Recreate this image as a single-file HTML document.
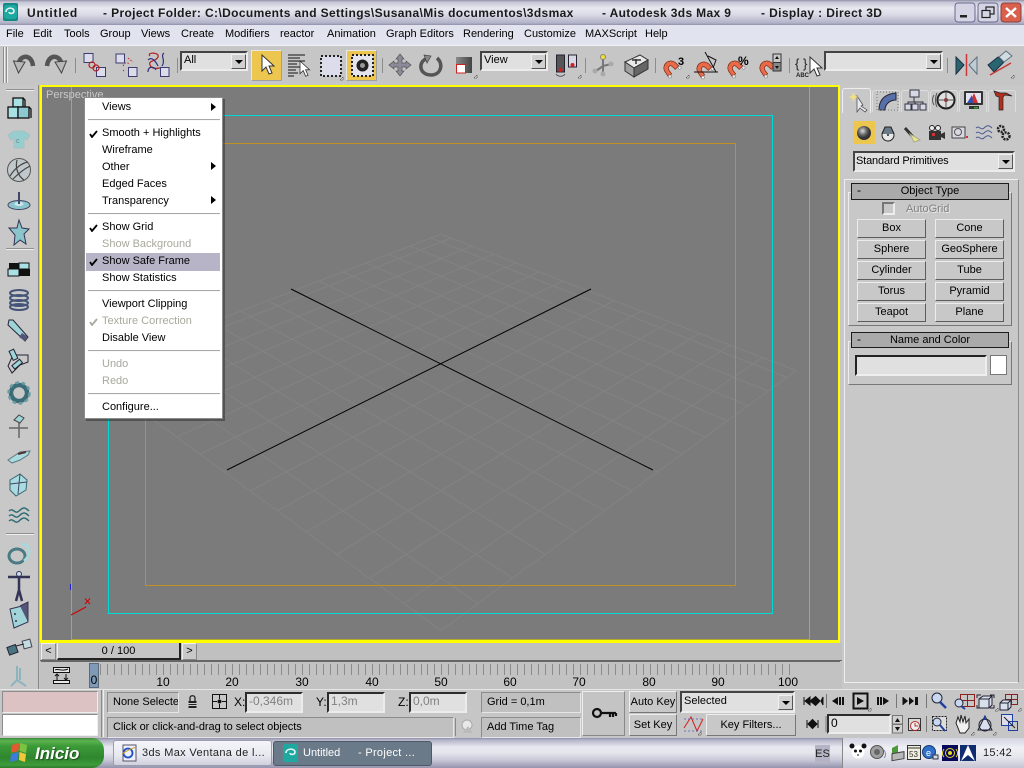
<!DOCTYPE html>
<html><head><meta charset="utf-8"><title>Untitled - 3ds Max</title>
<style>
html,body{margin:0;padding:0;width:1024px;height:768px;overflow:hidden;background:#c6c6c6}
body{position:relative;font:11px "Liberation Sans",sans-serif;color:#000}
.a{position:absolute;box-sizing:border-box}
.t{position:absolute;white-space:nowrap;font:11px/13px "Liberation Sans",sans-serif;color:#000}
.c{text-align:center}
.tt{position:absolute;top:6px;white-space:nowrap;font:bold 12px/14px "Liberation Sans",sans-serif;color:#1a1a1a}
.b{position:absolute;box-sizing:border-box;background:#c8c8c8;border:1px solid;border-color:#ececec #5c5c5c #5c5c5c #ececec;text-align:center;font:11px/17px "Liberation Sans",sans-serif}
.s{position:absolute;box-sizing:border-box;background:#e0e0e0;border:2px solid;border-color:#2c2c2c #ececec #ececec #2c2c2c;font:11px/15px "Liberation Sans",sans-serif;padding-left:2px;white-space:nowrap}
.e{position:absolute;box-sizing:border-box;background:#c0c0c0;border:1px solid;border-color:#8c8c8c #e6e6e6 #e6e6e6 #8c8c8c;font:11px/19px "Liberation Sans",sans-serif;white-space:nowrap;overflow:hidden}
.dd{position:absolute;box-sizing:border-box;background:#e0e0e0;border:2px solid;border-color:#444 #ececec #ececec #444;font:11px/14px "Liberation Sans",sans-serif;padding-left:2px}
.ar{position:absolute;top:0;right:0;width:15px;height:15px;background:#d0d0d0;border:1px solid;border-color:#f0f0f0 #555 #555 #f0f0f0;box-sizing:border-box}
.ar:after{content:"";position:absolute;left:3px;top:5px;border:4px solid transparent;border-top:4px solid #000;border-bottom:0}
.m{position:absolute;left:17px;white-space:nowrap;font:11px/13px "Liberation Sans",sans-serif;color:#000}
.g{color:#a8a89c}
.sep{position:absolute;left:3px;width:132px;height:2px;background:#a8a8a8;border-bottom:1px solid #f8f8f8;box-sizing:border-box}
.ck{position:absolute;left:4px;width:9px;height:8px}
.sm{position:absolute;left:126px;width:0;height:0;border:4px solid transparent;border-left:5px solid #000;border-right:0}
</style></head><body>

<!-- Title bar -->
<div class="a" style="left:0;top:0;width:1024px;height:25px;background:linear-gradient(#8f8fa8 0,#c4c4d4 2px,#e8e8f0 8px,#dcdce8 14px,#b2b2c8 23px,#8f8fa8 25px)"></div>
<div class="tt" style="left:27px;letter-spacing:.8px">Untitled</div>
<div class="tt" style="left:103px;letter-spacing:.37px">- Project Folder: C:\Documents and Settings\Susana\Mis documentos\3dsmax</div>
<div class="tt" style="left:602px;letter-spacing:.35px">- Autodesk 3ds Max 9</div>
<div class="tt" style="left:761px;letter-spacing:.38px">- Display : Direct 3D</div>

<!-- Menu -->
<div class="a" style="left:0;top:25px;width:1024px;height:20px;background:#e1e3ee"></div>
<div class="t" style="left:6px;top:28px">File</div>
<div class="t" style="left:33px;top:28px">Edit</div>
<div class="t" style="left:64px;top:28px">Tools</div>
<div class="t" style="left:100px;top:28px">Group</div>
<div class="t" style="left:141px;top:28px">Views</div>
<div class="t" style="left:181px;top:28px">Create</div>
<div class="t" style="left:225px;top:28px">Modifiers</div>
<div class="t" style="left:280px;top:28px">reactor</div>
<div class="t" style="left:327px;top:28px">Animation</div>
<div class="t" style="left:386px;top:28px">Graph Editors</div>
<div class="t" style="left:463px;top:28px">Rendering</div>
<div class="t" style="left:524px;top:28px">Customize</div>
<div class="t" style="left:585px;top:28px">MAXScript</div>
<div class="t" style="left:645px;top:28px">Help</div>

<!-- Toolbar -->
<div class="a" style="left:0;top:45px;width:1024px;height:40px;background:#c6c6c6;border-top:1px solid #f2f2f2"></div>
<div class="a" style="left:251px;top:50px;width:31px;height:31px;background:#ecc64e;border:1px solid;border-color:#e8e8e8 #a0a0a0 #a0a0a0 #e8e8e8"></div>
<div class="a" style="left:346px;top:50px;width:31px;height:31px;background:#ecc64e;border:1px solid;border-color:#e8e8e8 #a0a0a0 #a0a0a0 #e8e8e8"></div>
<div class="dd" style="left:180px;top:51px;width:68px;height:20px">All<span class="ar" style="top:1px"></span></div>
<div class="dd" style="left:480px;top:51px;width:68px;height:20px">View<span class="ar" style="top:1px"></span></div>
<div class="dd" style="left:824px;top:51px;width:119px;height:20px"><span class="ar" style="top:1px"></span></div>

<!-- Viewport -->
<div class="a" style="left:40px;top:85px;width:800px;height:558px;background:#7b7b7b;border:solid #ffff00;border-width:2px 2px 3px 2px"></div>
<svg class="a" style="left:42px;top:87px" width="796" height="553" viewBox="42 87 796 553">
<g fill="none" stroke="#838383" stroke-width="1">
<path d="M441 234.2L85.9 370.5M451.1 238.1L95.1 377.3M471.9 246.1L114.1 391.1M493.4 254.3L134 405.7M515.8 262.9L154.8 421M539 271.9L176.8 437.1M563.1 281.1L200 454M588.1 290.7L224.4 471.9M614.2 300.7L250.1 490.8M641.4 311.1L277.3 510.7M669.7 322L306.2 531.9M699.3 333.4L336.8 554.3M730.1 345.2L369.4 578.1M762.3 357.6L404 603.5M796.1 370.5L441 630.6"/>
<path d="M441 234.2L796.1 370.5M430.9 238.1L786.9 377.3M410.1 246.1L767.9 391.1M388.6 254.3L748 405.7M366.2 262.9L727.2 421M343 271.9L705.2 437.1M318.9 281.1L682 454M293.9 290.7L657.6 471.9M267.8 300.7L631.9 490.8M240.6 311.1L604.7 510.7M212.3 322L575.8 531.9M182.7 333.4L545.2 554.3M151.9 345.2L512.6 578.1M119.7 357.6L478 603.5M85.9 370.5L441 630.6"/>
</g>
<rect x="71.5" y="86.5" width="738" height="553" fill="none" stroke="#b4ac28"/>
<rect x="108.5" y="115.5" width="664" height="498" fill="none" stroke="#00d8d8"/>
<rect x="145.5" y="143.5" width="590" height="442" fill="none" stroke="#c09020"/>
<path d="M291 289L653 470M591 289L227 470" stroke="#000" stroke-width="1" fill="none"/>
<path d="M71 615L86 607" stroke="#d00000" fill="none"/>
<path d="M85 598.5L90 604M90 598.5L85 604" stroke="#d00000" fill="none"/>
<path d="M70.500 584V590" stroke="#2020d0" fill="none"/>
</svg>
<div class="t" style="left:46px;top:89px;color:#c8c8c8">Perspective</div>

<!-- Left panel -->
<div class="a" style="left:0;top:85px;width:39px;height:604px;background:#c8c8c8;border-right:1px solid #888"></div>
<div class="a" style="left:6px;top:89px;width:28px;height:2px;background:#909090;border-bottom:1px solid #eee"></div>
<div class="a" style="left:6px;top:248px;width:28px;height:2px;background:#909090;border-bottom:1px solid #eee"></div>
<div class="a" style="left:6px;top:533px;width:28px;height:2px;background:#909090;border-bottom:1px solid #eee"></div>

<!-- Right panel -->
<div class="a" style="left:841px;top:85px;width:183px;height:605px;background:#c8c8c8"></div>
<div class="a" style="left:844px;top:179px;width:175px;height:504px;border:1px solid;border-color:#eee #8c8c8c #eee #eee"></div>
<div class="a" style="left:842px;top:88px;width:29px;height:25px;background:#c8c8c8;border:1px solid #eee;border-bottom:0;border-radius:3px 3px 0 0"></div>
<div class="a" style="left:872px;top:90px;width:28px;height:22px;border:1px solid #ddd;border-bottom:0;border-radius:3px 3px 0 0"></div>
<div class="a" style="left:901px;top:90px;width:28px;height:22px;border:1px solid #ddd;border-bottom:0;border-radius:3px 3px 0 0"></div>
<div class="a" style="left:930px;top:90px;width:28px;height:22px;border:1px solid #ddd;border-bottom:0;border-radius:3px 3px 0 0"></div>
<div class="a" style="left:959px;top:90px;width:28px;height:22px;border:1px solid #ddd;border-bottom:0;border-radius:3px 3px 0 0"></div>
<div class="a" style="left:988px;top:90px;width:28px;height:22px;border:1px solid #ddd;border-bottom:0;border-radius:3px 3px 0 0"></div>
<div class="a" style="left:853px;top:121px;width:22px;height:23px;background:#ecc64e"></div>
<div class="dd" style="left:853px;top:151px;width:162px;height:21px;font-size:11px;line-height:16px;letter-spacing:-.15px;padding-left:1px">Standard Primitives<span class="ar" style="top:1px"></span></div>

<div class="a" style="left:848px;top:192px;width:164px;height:134px;border:1px solid;border-color:#eee #777 #777 #eee"></div>
<div class="a c" style="left:851px;top:183px;width:158px;height:17px;background:#aaaaaa;border:1px solid #1c1c1c;font:11px/15px 'Liberation Sans',sans-serif">Object Type</div>
<div class="t" style="left:857px;top:184px;font-size:12px">-</div>
<div class="a" style="left:882px;top:202px;width:13px;height:13px;background:#c8c8c8;border:2px solid;border-color:#777 #eee #eee #777"></div>
<div class="t" style="left:906px;top:203px;color:#808080;text-shadow:1px 1px 0 #e8e8e8">AutoGrid</div>
<div class="b" style="left:857px;top:219px;width:69px;height:19px">Box</div>
<div class="b" style="left:935px;top:219px;width:69px;height:19px">Cone</div>
<div class="b" style="left:857px;top:240px;width:69px;height:19px">Sphere</div>
<div class="b" style="left:935px;top:240px;width:69px;height:19px">GeoSphere</div>
<div class="b" style="left:857px;top:261px;width:69px;height:19px">Cylinder</div>
<div class="b" style="left:935px;top:261px;width:69px;height:19px">Tube</div>
<div class="b" style="left:857px;top:282px;width:69px;height:19px">Torus</div>
<div class="b" style="left:935px;top:282px;width:69px;height:19px">Pyramid</div>
<div class="b" style="left:857px;top:303px;width:69px;height:19px">Teapot</div>
<div class="b" style="left:935px;top:303px;width:69px;height:19px">Plane</div>

<div class="a" style="left:848px;top:341px;width:164px;height:44px;border:1px solid;border-color:#eee #777 #777 #eee"></div>
<div class="a c" style="left:851px;top:332px;width:158px;height:16px;background:#aaaaaa;border:1px solid #1c1c1c;font:11px/14px 'Liberation Sans',sans-serif">Name and Color</div>
<div class="t" style="left:857px;top:333px;font-size:12px">-</div>
<div class="a" style="left:855px;top:355px;width:132px;height:21px;background:#e0e0e0;border:2px solid;border-color:#222 #eee #eee #222"></div>
<div class="a" style="left:990px;top:355px;width:17px;height:20px;background:#fff;border:1px solid #777"></div>

<!-- Time slider -->
<div class="a" style="left:40px;top:643px;width:802px;height:18px;background:#c0c0c0;border-bottom:1px solid #666"></div>
<div class="a c" style="left:41px;top:643px;width:15px;height:17px;background:#c8c8c8;border:1px solid;border-color:#eee #888 #888 #eee;font:11px/15px 'Liberation Sans',sans-serif">&lt;</div>
<div class="a c" style="left:57px;top:643px;width:124px;height:17px;background:#c4c4c4;border:1px solid;border-width:0 2px 2px 1px;border-color:#eee #222 #222 #eee;font:11px/16px 'Liberation Sans',sans-serif">0 / 100</div>
<div class="a c" style="left:182px;top:643px;width:15px;height:17px;background:#c8c8c8;border:1px solid;border-color:#eee #888 #888 #eee;font:11px/15px 'Liberation Sans',sans-serif">&gt;</div>

<!-- Track -->
<div class="a" style="left:40px;top:661px;width:802px;height:28px;background:#c2c2c2"></div>
<div class="a c" style="left:89px;top:663px;width:10px;height:25px;background:#7e9ab6;border:1px solid #5a6a7a;font:12px/32px 'Liberation Sans',sans-serif">0</div>
<div class="t c" style="left:148px;top:675px;width:30px;font-size:12px;line-height:14px">10</div>
<div class="t c" style="left:217px;top:675px;width:30px;font-size:12px;line-height:14px">20</div>
<div class="t c" style="left:287px;top:675px;width:30px;font-size:12px;line-height:14px">30</div>
<div class="t c" style="left:357px;top:675px;width:30px;font-size:12px;line-height:14px">40</div>
<div class="t c" style="left:426px;top:675px;width:30px;font-size:12px;line-height:14px">50</div>
<div class="t c" style="left:495px;top:675px;width:30px;font-size:12px;line-height:14px">60</div>
<div class="t c" style="left:564px;top:675px;width:30px;font-size:12px;line-height:14px">70</div>
<div class="t c" style="left:634px;top:675px;width:30px;font-size:12px;line-height:14px">80</div>
<div class="t c" style="left:703px;top:675px;width:30px;font-size:12px;line-height:14px">90</div>
<div class="t c" style="left:773px;top:675px;width:30px;font-size:12px;line-height:14px">100</div>

<!-- Status -->
<div class="a" style="left:0;top:689px;width:1024px;height:49px;background:#c6c6c6;border-top:1px solid #e6e6e6"></div>
<div class="a" style="left:2px;top:691px;width:96px;height:22px;background:#dcc2c2;border:1px solid;border-color:#8c8c8c #eee #eee #8c8c8c"></div>
<div class="a" style="left:2px;top:714px;width:96px;height:22px;background:#fff;border:1px solid;border-color:#8c8c8c #eee #eee #8c8c8c"></div>
<div class="a" style="left:101px;top:690px;width:3px;height:47px;border-left:1px solid #888;border-right:1px solid #eee"></div>
<div class="e" style="left:107px;top:692px;width:72px;height:21px;padding-left:5px">None Selecte</div>
<div class="t" style="left:234px;top:696px;font-size:12px">X:</div>
<div class="s" style="left:245px;top:692px;width:58px;height:21px;color:#808080;font-size:12px">-0,346m</div>
<div class="t" style="left:316px;top:696px;font-size:12px">Y:</div>
<div class="s" style="left:327px;top:692px;width:58px;height:21px;color:#808080;font-size:12px">1,3m</div>
<div class="t" style="left:398px;top:696px;font-size:12px">Z:</div>
<div class="s" style="left:409px;top:692px;width:58px;height:21px;color:#808080;font-size:12px">0,0m</div>
<div class="e" style="left:481px;top:692px;width:100px;height:21px;padding-left:5px">Grid = 0,1m</div>
<div class="e" style="left:107px;top:717px;width:347px;height:21px;padding-left:5px;letter-spacing:-.05px">Click or click-and-drag to select objects</div>
<div class="e" style="left:481px;top:717px;width:100px;height:21px;padding-left:5px">Add Time Tag</div>
<div class="a" style="left:582px;top:691px;width:43px;height:45px;background:#c4c4c4;border:1px solid;border-color:#eee #888 #888 #eee"></div>
<div class="b" style="left:629px;top:691px;width:48px;height:22px;border-color:#eee #777 #777 #eee;font:11px/20px 'Liberation Sans',sans-serif;white-space:nowrap">Auto Key</div>
<div class="b" style="left:629px;top:714px;width:48px;height:22px;border-color:#eee #777 #777 #eee;font:11px/20px 'Liberation Sans',sans-serif">Set Key</div>
<div class="dd" style="left:680px;top:691px;width:115px;height:22px;font-size:11px;line-height:16px">Selected<span class="ar" style="top:2px;right:0"></span></div>
<div class="b" style="left:706px;top:714px;width:90px;height:22px;border-color:#eee #777 #777 #eee;font:11px/20px 'Liberation Sans',sans-serif">Key Filters...</div>
<div class="s" style="left:827px;top:714px;width:64px;height:20px;font-size:12px">0</div>

<!-- Taskbar -->
<div class="a" style="left:0;top:738px;width:1024px;height:30px;background:linear-gradient(#8e8eac 0,#b4b4c8 2px,#e8e8f0 9px,#e4e4ec 15px,#c8c8d8 22px,#a0a0b8 28px,#9494ae 30px)"></div>
<div class="a" style="left:842px;top:738px;width:182px;height:30px;background:linear-gradient(#d4d4e2 0,#f0f0f6 10px,#e4e4ec 20px,#c4c4d4 30px);border-left:1px solid #888"></div>
<div class="a" style="left:0;top:738px;width:104px;height:30px;background:linear-gradient(#3e8a3a 0,#5cb450 3px,#3c9a38 8px,#2f862e 20px,#3f9c3c 27px,#2a7a2a 30px);border-radius:0 12px 12px 0"></div>
<div class="t" style="left:35px;top:744px;font:italic bold 17px/19px 'Liberation Sans',sans-serif;color:#fff;text-shadow:1px 1px 1px #1c4c1c">Inicio</div>
<div class="a" style="left:113px;top:740px;width:159px;height:26px;background:linear-gradient(#f4f4fa,#e8e8f0 60%,#d0d0de);border:1px solid #9c9cb0;border-radius:3px"></div>
<div class="t" style="left:142px;top:747px;color:#222;letter-spacing:.35px">3ds Max Ventana de l...</div>
<div class="a" style="left:273px;top:741px;width:159px;height:25px;background:#6a7a88;border:1px solid #4c5a68;border-radius:3px"></div>
<div class="t" style="left:303px;top:747px;color:#fff">Untitled</div>
<div class="t" style="left:358px;top:747px;color:#fff;letter-spacing:.3px">- Project ...</div>
<div class="a c" style="left:815px;top:745px;width:15px;height:18px;background:#b4b4c4;font:11px/18px 'Liberation Sans',sans-serif;color:#222">ES</div>
<div class="t" style="left:983px;top:747px;color:#222;letter-spacing:.3px">15:42</div>

<!-- Icons overlay -->
<svg class="a" style="left:0;top:0" width="1024" height="768" viewBox="0 0 1024 768">
<defs>
<g id="mag"><path d="M3 14 C-1 6 9 -2 16 5 L19 8 L15 12 L12 9 C9 6 6 9 8 13 L11 17 L7 20Z" fill="#e86a48" stroke="#702010" stroke-width=".7" transform="translate(0,1)"/><circle cx="9" cy="21" r="1.8" fill="#eee" stroke="#555" stroke-width=".5"/><circle cx="20" cy="11" r="1.8" fill="#eee" stroke="#555" stroke-width=".5"/></g>
<path id="cur" d="M0 0L0 16L4 12L7 19L10 18L7 11L12 11Z" fill="#fff" stroke="#333" stroke-width="1"/>
<g id="cor"><path d="M0 3L3 3L3 0Z" fill="#fff" stroke="#222" stroke-width=".5"/></g>
</defs>

<!-- title icon -->
<rect x="3" y="3" width="15" height="18" rx="2" fill="#158a84"/><rect x="4" y="5" width="13" height="14" rx="3" fill="#1fa8a0"/><path d="M6 12 C6 7 14 7 14 11 C14 14 9 14 9 12" fill="none" stroke="#e4f4f4" stroke-width="1.6"/>
<!-- window buttons -->
<rect x="955" y="3" width="20" height="19" rx="3" fill="#d4d4e4" stroke="#6a6a90"/><rect x="960" y="15" width="7" height="2.500" fill="#222"/>
<rect x="978" y="3" width="20" height="19" rx="3" fill="#d4d4e4" stroke="#6a6a90"/><rect x="986" y="7" width="8" height="7" fill="none" stroke="#222" stroke-width="1.200"/><rect x="982" y="10.500" width="8" height="7" fill="#d4d4e4" stroke="#222" stroke-width="1.200"/>
<rect x="1001" y="3" width="20" height="19" rx="3" fill="#d8604c" stroke="#8a4040"/><path d="M1006 8L1016 17M1016 8L1006 17" stroke="#fff" stroke-width="2.400"/>

<!-- toolbar handle -->
<path d="M3.500 47V83M6.500 47V83" stroke="#8c8c8c"/><path d="M4.500 47V83M7.500 47V83" stroke="#efefef"/>
<!-- separators -->
<g stroke="#8c8c8c"><path d="M75.500 58V73M177.500 58V73M382.500 58V73M585.500 58V73M655.500 58V73M789.500 58V73M947.500 58V73"/></g>
<!-- undo redo -->
<path d="M33 66C32 55 22 54 19 62" fill="none" stroke="#555" stroke-width="4.500"/><path d="M13.500 61L25 62L18.500 73Z" fill="#b8b8b8" stroke="#444" stroke-width="1"/>
<path d="M47 66C48 55 58 54 61 62" fill="none" stroke="#555" stroke-width="4.500"/><path d="M66.500 61L55 62L61.500 73Z" fill="#b8b8b8" stroke="#444" stroke-width="1"/>
<!-- link -->
<g fill="#dcdcea" stroke="#3c3c70"><rect x="84" y="53.500" width="9" height="9"/><rect x="96.500" y="67.500" width="9" height="9"/></g><circle cx="92" cy="65" r="3" fill="none" stroke="#b02020" stroke-width="1.200"/><circle cx="96" cy="68" r="3" fill="none" stroke="#b02020" stroke-width="1.200"/>
<!-- unlink -->
<g fill="#dcdcea" stroke="#3c3c70"><rect x="116" y="54" width="8.500" height="9"/><rect x="128.500" y="67.500" width="8.500" height="9"/></g><path d="M123 66C125 62 127 62 129 64M123 70L125 72M128 58L133 62" fill="none" stroke="#c03030" stroke-dasharray="1.500 1.500"/>
<!-- bind -->
<path d="M150 56C146 52 160 52 158 57C156 62 148 60 150 65C152 70 158 68 160 68" fill="none" stroke="#b02020" stroke-width="1.200"/><path d="M148 60C152 56 156 62 158 66M148 72C148 66 154 66 156 70M164 53C160 56 166 60 162 66" fill="none" stroke="#303080" stroke-width="1.200"/><rect x="160.500" y="67.500" width="8.500" height="9" fill="#dcdcea" stroke="#3c3c70"/>
<!-- select -->
<use href="#cur" transform="translate(262,55)"/>
<!-- select by name -->
<path d="M288 55H305M288 58H300M288 61H305M288 64H297M288 67H302M288 70H296M288 73H298M288 76H294" stroke="#111"/><use href="#cur" transform="translate(300,61) scale(.8)"/>
<!-- rect region -->
<rect x="321" y="56" width="20" height="20" fill="#dcdcea" stroke="#222" stroke-width="2" stroke-dasharray="2 2"/><use href="#cor" transform="translate(340,77)"/>
<!-- window crossing -->
<rect x="352" y="55" width="21" height="21" fill="#e4e4ee" stroke="#222" stroke-width="2" stroke-dasharray="2 2"/><circle cx="362.500" cy="65.500" r="6" fill="#222"/><circle cx="362.500" cy="65.500" r="2.500" fill="#999"/>
<!-- move -->
<path d="M400 54L404 59H402V63H406V61L411 65L406 69V67H402V71H404L400 76L396 71H398V67H394V69L389 65L394 61V63H398V59H396Z" fill="#8a8a98" stroke="#555" stroke-width=".7"/>
<!-- rotate -->
<path d="M426 59C418 62 419 75 431 75C441 75 444 64 437 58" fill="none" stroke="#555" stroke-width="3.500"/><path d="M424 55L431 56L427 63Z" fill="#888" stroke="#444" stroke-width=".7"/>
<!-- scale -->
<defs><linearGradient id="gg" x1="0" y1="0" x2="1" y2="0"><stop offset="0" stop-color="#8a8a8a"/><stop offset="1" stop-color="#444"/></linearGradient></defs>
<rect x="456" y="57" width="16" height="16" fill="url(#gg)"/><rect x="456.500" y="64.500" width="9" height="8.500" fill="#fff" stroke="#d02020"/><use href="#cor" transform="translate(474,75)"/>
<!-- pivot -->
<rect x="556.500" y="55" width="8" height="17" fill="#555" stroke="#223"/><rect x="568.500" y="55" width="8" height="12" fill="#d8d8e4" stroke="#223"/><circle cx="560.500" cy="70" r="2" fill="#d02020"/><circle cx="572.500" cy="65" r="2" fill="#d02020"/><path d="M556 74C558 77 563 77 565 74" fill="none" stroke="#556"/><use href="#cor" transform="translate(578,75)"/>
<!-- manipulate -->
<path d="M603 59V66M603 66L596 71M603 66L611 64M603 66V74" stroke="#777" stroke-width="2"/><circle cx="603" cy="57" r="2.500" fill="#eedc40" stroke="#886"/><circle cx="595" cy="71" r="2.500" fill="#aaa"/><circle cx="611" cy="64" r="2.500" fill="#aaa"/><circle cx="603" cy="74" r="2.500" fill="#aaa"/>
<!-- keyboard -->
<path d="M625 62L640 55L648 60L634 68Z" fill="#e8e8e8" stroke="#333"/><path d="M625 62L634 68V77L625 71Z" fill="#a0a0a0" stroke="#333"/><path d="M634 68L648 60V69L634 77Z" fill="#666" stroke="#333"/><path d="M632 60H641M636 59V64" stroke="#333" stroke-width="1.500"/>
<!-- snaps -->
<use href="#mag" transform="translate(662,58) scale(.88)"/><text x="678" y="65" font-family="Liberation Sans" font-size="11" font-weight="bold">3</text><use href="#cor" transform="translate(686,75)"/>
<use href="#mag" transform="translate(695,59) scale(.88)"/><path d="M694 72H718M705 52L716 72" stroke="#111" fill="none"/><path d="M708 56L716 60L713 68" stroke="#111" fill="none"/>
<use href="#mag" transform="translate(726,58) scale(.88)"/><text x="738" y="65" font-family="Liberation Sans" font-size="12" font-weight="bold">%</text>
<use href="#mag" transform="translate(758,58) scale(.88)"/><rect x="773" y="54" width="8" height="8.500" fill="#c8c8c8" stroke="#333"/><rect x="773" y="62.500" width="8" height="8.500" fill="#888" stroke="#333"/><path d="M777 56L775 59H779ZM777 69L775 66H779Z" fill="#111"/>
<!-- named -->
<text x="795" y="68" font-family="Liberation Sans" font-size="13" fill="#222">{ }</text><text x="796" y="77" font-family="Liberation Sans" font-size="6" font-weight="bold" fill="#222">ABC</text><use href="#cur" transform="translate(810,57)"/>
<!-- mirror -->
<path d="M956 57L964 65L956 74Z" fill="#2a6470" stroke="#1a3040"/><path d="M977 57L969 65L977 74Z" fill="#c0ccd4" stroke="#607080"/><path d="M966.500 54V76" stroke="#c83838" stroke-width="1.500"/>
<!-- align -->
<path d="M988 65L998 57L1004 62L994 72Z" fill="#2a6470" stroke="#1a3040"/><path d="M999 57L1006 51L1012 56L1004 62Z" fill="#d0dce0" stroke="#607080"/><path d="M990 72L1011 60" stroke="#c83838" stroke-width="1.500" transform="translate(0,3)"/><use href="#cor" transform="translate(1011,75)"/>

<!-- left icons -->
<g stroke="#111" stroke-width="1.300">
<rect x="13" y="98" width="10" height="9" fill="#a8e0e4"/><rect x="8" y="107" width="10" height="11" fill="#a8e0e4"/><rect x="18" y="107" width="11" height="11" fill="#8cc8d0"/><path d="M23 98L25 100V107M29 107L31 109V118" fill="none"/>
</g>
<path d="M8 135L14 131H24L30 135L27 140L24 138V148H14V138L11 140Z" fill="#96ced0" stroke="#a8c0c0"/><text x="16" y="143" font-family="Liberation Sans" font-size="7" fill="#608888">c</text>
<circle cx="19" cy="170" r="11.500" fill="#c0c8cc" stroke="#555"/><path d="M10 176C15 168 22 163 28 162M13 179C20 172 26 168 30 166M17 160C15 168 18 176 24 180" fill="none" stroke="#444" stroke-width="1.200"/>
<ellipse cx="19" cy="205" rx="11" ry="4.500" fill="#8cc4cc" stroke="#446"/><ellipse cx="19" cy="204" rx="4.500" ry="2" fill="#c8e8ec"/><path d="M19 192V204" stroke="#446" stroke-width="2"/>
<path d="M19 220L22 228L29 229L24 234L26 244L20 240L14 245L15 235L9 228L17 228Z" fill="#8cc4cc" stroke="#335"/>
<rect x="9" y="263" width="10" height="6" fill="#111"/><rect x="19" y="263" width="10" height="6" fill="#a8e0e4" stroke="#111"/><rect x="8" y="269" width="11" height="7" fill="#a8e0e4" stroke="#111"/><rect x="19" y="269" width="11" height="7" fill="#111"/>
<g fill="none" stroke="#457" stroke-width="2"><ellipse cx="19" cy="293" rx="9" ry="3"/><ellipse cx="19" cy="298" rx="9" ry="3"/><ellipse cx="19" cy="303" rx="9" ry="3"/><ellipse cx="19" cy="307" rx="9" ry="3"/></g>
<path d="M9 320L13 320L28 337L25 341L8 325Z" fill="#9ed4d8" stroke="#223"/><path d="M22 333L28 337L25 341L19 337Z" fill="#557" />
<path d="M13 355L28 355L28 362L20 365L12 373L8 366Z" fill="none" stroke="#223" stroke-width="1"/><rect x="11" y="350" width="5" height="10" transform="rotate(-25 13 355)" fill="#9ed4d8" stroke="#223"/><rect x="12" y="362" width="10" height="4.500" transform="rotate(-40 17 364)" fill="#9ed4d8" stroke="#223"/>
<circle cx="19" cy="393" r="8" fill="none" stroke="#3c6c78" stroke-width="4.500"/><circle cx="19" cy="393" r="10.500" fill="none" stroke="#6c9ca4" stroke-width="2.500" stroke-dasharray="3.500 3"/>
<path d="M9 428H28M19 418V438" stroke="#666" stroke-width="1.500"/><path d="M14 420L19 415L24 418L20 423Z" fill="#9ed4d8" stroke="#444"/>
<path d="M8 460L20 452L30 451L28 455L20 460L12 463Z" fill="#a8dce0" stroke="#5a7a80"/><path d="M18 454L26 452" stroke="#533" stroke-width="2"/>
<path d="M10 480L20 474L27 480L26 490L16 496L10 490Z" fill="#a8dce0" stroke="#3c6470"/><path d="M20 474L18 494M10 484L27 482" stroke="#446"/>
<g fill="none" stroke="#2e6c74" stroke-width="1.400"><path d="M9 511C13 507 15 515 19 511S25 507 29 511"/><path d="M9 516C13 512 15 520 19 516S25 512 29 516"/><path d="M9 521C13 517 15 525 19 521S25 517 29 521"/></g>
<g fill="none"><ellipse cx="17" cy="556" rx="8" ry="7" stroke="#4a7a84" stroke-width="3"/><path d="M22 544C31 545 31 556 24 561" stroke="#a8d8dc" stroke-width="3"/></g>
<circle cx="19" cy="574" r="2.500" fill="#cde" stroke="#335"/><path d="M8 577H30M19 577V590M19 590L16 601M19 590L22 601" stroke="#335" stroke-width="2.500"/>
<path d="M10 609L26 605L28 622L14 628Z" fill="#a0d4d8" stroke="#335"/><path d="M20 606L28 602V622" fill="#557" stroke="#335"/><circle cx="15" cy="614" r="1" fill="#333"/><circle cx="16" cy="621" r="1" fill="#333"/>
<rect x="8" y="646" width="9" height="8" transform="rotate(-20 12 650)" fill="#4a7480" stroke="#223"/><rect x="23" y="640" width="8" height="8" transform="rotate(-15 27 644)" fill="#c4dce0" stroke="#445"/><path d="M16 646L24 644" stroke="#223"/>
<path d="M17 666V680L11 686M17 666V680L26 686M20 668V680" fill="none" stroke="#8cb4bc" stroke-width="2"/>

<!-- right tab icons -->
<path d="M857 96L863 105L861 106L867 110L865 112L860 108L857 112Z" fill="#e8e8f0" stroke="#444" stroke-width=".7"/><path d="M853 92L855 96L859 97L855 98L853 102L852 98L848 97L852 96Z" fill="#f0e080"/>
<path d="M879 110C879 100 884 94 896 93V100C890 100 885 104 885 110Z" fill="#5870a8" stroke="#223"/><rect x="877" y="92" width="21" height="18" fill="none" stroke="#777" stroke-dasharray="1 2"/>
<rect x="910" y="90" width="9" height="7" fill="#d8d8e4" stroke="#334"/><rect x="905" y="104" width="6" height="6" fill="#d8d8e4" stroke="#334"/><rect x="912" y="104" width="6" height="6" fill="#d8d8e4" stroke="#334"/><rect x="920" y="104" width="6" height="6" fill="#d8d8e4" stroke="#334"/><path d="M914 97V102M908 104V102H923V104M915 102V104" fill="none" stroke="#334"/>
<circle cx="946" cy="100" r="8.500" fill="#e0e0e0" stroke="#222" stroke-width="2"/><circle cx="946" cy="100" r="2" fill="#c02020"/><path d="M946 92V108M938 100H954" stroke="#555"/><path d="M934 95C932 98 932 102 934 105M937 93C935 97 935 103 937 107" fill="none" stroke="#555"/>
<rect x="964" y="91" width="19" height="14" rx="1" fill="#333"/><rect x="966" y="93" width="15" height="10" fill="#e4e4f0"/><path d="M970 103L974 93L978 103Z" fill="#d03030"/><path d="M967 103L972 95L973 103Z" fill="#3050b0"/><rect x="969" y="106" width="10" height="3" fill="#333"/><rect x="974" y="107" width="4" height="1.500" fill="#3a3"/>
<path d="M994 91L1000 93H1006L1012 96L1005 95L1003 97V110H999V97L996 96Z" fill="#b03020" stroke="#222" stroke-width=".7"/>

<!-- create sub icons -->
<defs><radialGradient id="sp" cx=".4" cy=".35"><stop offset="0" stop-color="#ddd"/><stop offset=".6" stop-color="#666"/><stop offset="1" stop-color="#333"/></radialGradient></defs>
<circle cx="864" cy="133" r="7" fill="url(#sp)"/>
<circle cx="888" cy="135" r="6" fill="#e8e8e8" stroke="#222"/><path d="M882 134L885 127H891L894 134" fill="#6a7a88" stroke="#222"/><circle cx="888" cy="135" r="1" fill="#222"/>
<path d="M905 128L913 137" stroke="#333" stroke-width="3"/><path d="M910 134L920 140L914 142Z" fill="#e8e890" stroke="#aa8"/>
<rect x="929" y="131" width="12" height="9" fill="#333"/><circle cx="932" cy="128" r="2.500" fill="#eee" stroke="#222"/><circle cx="938" cy="128" r="2.500" fill="#eee" stroke="#222"/><path d="M941 134L945 132V139L941 137Z" fill="#333"/><rect x="932" y="133" width="3" height="3" fill="#c33"/>
<rect x="952" y="127" width="13" height="11" fill="#d8d8e4" stroke="#444"/><circle cx="958" cy="132" r="3.500" fill="none" stroke="#555"/><path d="M966 137H968" stroke="#c33" stroke-width="2"/>
<g fill="none" stroke="#4a5a90"><path d="M976 128C979 125 981 131 984 128S989 125 992 128"/><path d="M976 133C979 130 981 136 984 133S989 130 992 133"/><path d="M976 138C979 135 981 141 984 138S989 135 992 138"/></g>
<circle cx="1001" cy="129" r="3" fill="none" stroke="#222" stroke-width="2.500" stroke-dasharray="2 1"/><circle cx="1006" cy="136" r="3.500" fill="none" stroke="#222" stroke-width="2.500" stroke-dasharray="2 1"/>

<!-- ruler -->
<path d="M41 661.500H840" stroke="#666"/>
<path d="M100.500 664V675M107.500 664V675M114.500 664V675M121.500 664V675M128.500 664V675M135.500 664V675M142.500 664V675M149.500 664V675M156.500 664V675M163.500 664V675M170.500 664V675M177.500 664V675M183.500 664V675M190.500 664V675M197.500 664V675M204.500 664V675M211.500 664V675M218.500 664V675M225.500 664V675M232.500 664V675M239.500 664V675M246.500 664V675M253.500 664V675M260.500 664V675M267.500 664V675M274.500 664V675M281.500 664V675M288.500 664V675M295.500 664V675M302.500 664V675M309.500 664V675M316.500 664V675M323.500 664V675M330.500 664V675M337.500 664V675M344.500 664V675M351.500 664V675M358.500 664V675M365.500 664V675M372.500 664V675M379.500 664V675M386.500 664V675M393.500 664V675M400.500 664V675M407.500 664V675M414.500 664V675M421.500 664V675M427.500 664V675M434.500 664V675M441.500 664V675M448.500 664V675M455.500 664V675M462.500 664V675M469.500 664V675M476.500 664V675M483.500 664V675M490.500 664V675M497.500 664V675M504.500 664V675M510.500 664V675M517.500 664V675M524.500 664V675M531.500 664V675M538.500 664V675M545.500 664V675M552.500 664V675M559.500 664V675M566.500 664V675M573.500 664V675M580.500 664V675M587.500 664V675M594.500 664V675M601.500 664V675M608.500 664V675M615.500 664V675M622.500 664V675M629.500 664V675M636.500 664V675M643.500 664V675M650.500 664V675M657.500 664V675M664.500 664V675M671.500 664V675M678.500 664V675M685.500 664V675M692.500 664V675M699.500 664V675M706.500 664V675M713.500 664V675M719.500 664V675M726.500 664V675M733.500 664V675M740.500 664V675M747.500 664V675M754.500 664V675M761.500 664V675M768.500 664V675M775.500 664V675M782.500 664V675M789.500 664V675" stroke="#8c8c8c"/>
<!-- mini curve icon -->
<rect x="53.500" y="667.500" width="16" height="5" fill="#e8e8e8" stroke="#111"/><path d="M55 670C58 668 62 672 68 669" fill="none" stroke="#111"/><path d="M57 674V680M55 676L57 674L59 676M66 674V680M64 678L66 680L68 678" fill="none" stroke="#111"/><rect x="53.500" y="680.500" width="16" height="3" fill="#e8e8e8" stroke="#111"/>

<!-- lock, key target -->
<rect x="188.500" y="701" width="8" height="7" fill="#222"/><path d="M190 701V698C190 695 195 695 195 698V701" fill="none" stroke="#222" stroke-width="1.300"/><path d="M188 703.500H197M188 705.500H197" stroke="#ccc"/>
<rect x="212.500" y="694.500" width="14" height="14" fill="#c8c8c8" stroke="#111"/><circle cx="219.500" cy="701.500" r="2" fill="#111"/><path d="M219.500 695V699M219.500 704V708M213 701.500H217M222 701.500H226" stroke="#111"/>
<!-- satellite -->
<circle cx="467" cy="725" r="5" fill="#e8e8e8" stroke="#aaa"/><path d="M463 733H473L468 726Z" fill="#bbb"/>
<path d="M455.500 718V736" stroke="#888"/>
<!-- key -->
<circle cx="597" cy="713" r="4" fill="none" stroke="#111" stroke-width="2.200"/><path d="M601 713H616M610 713V717M613 713V717M616 713V716" stroke="#111" stroke-width="2.200" fill="none"/>
<!-- curve -->
<path d="M684 728L691 717L697 731L703 719" fill="none" stroke="#d02020"/><path d="M684 719H703M684 731H703" stroke="#7070c0" stroke-dasharray="2 2"/><use href="#cor" transform="translate(698,732)"/>

<!-- anim controls -->
<path d="M804 697V705M805 701L810 697V705ZM810 701L815 697V705ZM816 697V705L820 701ZM823 697V705L821 701Z" fill="#111" stroke="#111"/>
<path d="M832 701L838 697V705ZM839 697H841V705H839ZM842 697H844V705H842Z" fill="#111"/>
<rect x="853.500" y="693.500" width="14" height="15" fill="#c8c8c8" stroke="#111" stroke-width="2"/><path d="M857 697L864 701L857 705Z" fill="#111"/><use href="#cor" transform="translate(868,708)"/>
<path d="M877 697H879V705H877ZM880 697H882V705H880ZM883 697L889 701L883 705Z" fill="#111"/>
<path d="M903 697L908 701L903 705ZM909 697L914 701L909 705ZM915 697H918V705H915Z" fill="#111"/><path d="M903 697V705" stroke="#111"/>
<path d="M826.500 694V708M896.500 694V708M926.500 694V708M926.500 716V732M826 716V732" stroke="#777"/>
<path d="M807 720V728M818 720V728M808 724L812 720V728ZM817 724L813 720V728Z" fill="#111" stroke="#111"/>
<!-- spinner -->
<rect x="892.500" y="715.500" width="10" height="8.500" fill="#d0d0d0" stroke="#777"/><rect x="892.500" y="724.500" width="10" height="8.500" fill="#d0d0d0" stroke="#777"/><path d="M897.500 718L895 722H900ZM897.500 731L895 727H900Z" fill="#111"/>
<!-- time config -->
<rect x="908.500" y="718.500" width="12" height="12" fill="#d8d8d8" stroke="#333"/><circle cx="915" cy="726" r="4.500" fill="#eee" stroke="#b03030"/><path d="M915 723V726H918" stroke="#b03030" fill="none"/>
<!-- nav -->
<circle cx="937" cy="698" r="5" fill="#c8d8f0" stroke="#223"/><path d="M940 702L946 708" stroke="#2040a0" stroke-width="2.500"/>
<rect x="960.500" y="694.500" width="7" height="6" fill="none" stroke="#8a2020"/><rect x="967.500" y="694.500" width="7" height="6" fill="none" stroke="#8a2020"/><rect x="960.500" y="700.500" width="7" height="6" fill="none" stroke="#8a2020"/><rect x="967.500" y="700.500" width="7" height="6" fill="none" stroke="#8a2020"/><circle cx="959" cy="703" r="4" fill="#c8d8f0" stroke="#223"/><path d="M961 706L965 709" stroke="#2040a0" stroke-width="2"/>
<path d="M977 698V695H981M990 695H994V698M977 705V708H981M990 708H994V705" fill="none" stroke="#223"/><path d="M979 699L983 696H992V705L989 708H979ZM979 699H989V708M989 699L992 696" fill="#d8e0ec" stroke="#223"/><use href="#cor" transform="translate(995,708)"/>
<rect x="1005.500" y="694.500" width="6" height="5" fill="none" stroke="#8a2020"/><rect x="1011.500" y="694.500" width="6" height="5" fill="none" stroke="#8a2020"/><rect x="1011.500" y="699.500" width="6" height="5" fill="none" stroke="#8a2020"/><path d="M1000 703L1003 700H1011V707L1008 710H1000ZM1000 703H1008V710M1008 703L1011 700" fill="#d8e0ec" stroke="#223"/><use href="#cor" transform="translate(1018,708)"/>
<rect x="932.500" y="716.500" width="14" height="14" fill="#ddd" stroke="#222" stroke-dasharray="2 1"/><circle cx="937" cy="722" r="4" fill="#c8d8f0" stroke="#223"/><path d="M940 725L945 731" stroke="#2040a0" stroke-width="2"/>
<path d="M956 723L958 717L960 722L961 715L963 722L965 716L966 723L969 719L969 728L965 733H960Z" fill="#f0f0f0" stroke="#222"/><use href="#cor" transform="translate(971,732)"/>
<path d="M978 730L985 716L992 730Z" fill="#d8e0ec" stroke="#223"/><circle cx="985" cy="725" r="6" fill="none" stroke="#223"/><path d="M985 716V720" stroke="#2040a0" stroke-width="2"/><use href="#cor" transform="translate(993,732)"/>
<rect x="1001.500" y="714.500" width="11" height="11" fill="#dde" stroke="#2040a0"/><rect x="1008.500" y="721.500" width="9" height="9" fill="none" stroke="#2040a0"/><path d="M1004 717L1015 728" stroke="#222"/>

<!-- start flag -->
<path d="M12 745L19 743L18.500 751L11 753Z" fill="#e25a30"/><path d="M20 743L27 745L26 753L19.500 751Z" fill="#7cc440"/><path d="M11 754L18.500 752L18 760L10 762Z" fill="#3c7cd8"/><path d="M19.500 752L26 754L25 762L19 760Z" fill="#f0c838"/>
<!-- task icons -->
<rect x="123" y="745" width="13" height="16" fill="#eef" stroke="#556"/><circle cx="128" cy="753" r="4.500" fill="none" stroke="#2050c0" stroke-width="1.800"/><path d="M122 754C127 750 131 749 136 747" stroke="#d0a020" fill="none"/>
<rect x="283" y="744" width="15" height="18" rx="2" fill="#1fa8a0"/><path d="M286 753C286 748 295 748 295 752C295 755 290 755 290 753" fill="none" stroke="#e4f4f4" stroke-width="1.600"/>
<!-- tray -->
<circle cx="858" cy="752" r="6.500" fill="#fff"/><circle cx="852" cy="746" r="2.500" fill="#111"/><circle cx="864" cy="746" r="2.500" fill="#111"/><circle cx="855.500" cy="751" r="1.500" fill="#111"/><circle cx="860.500" cy="751" r="1.500" fill="#111"/><path d="M857 755H859" stroke="#111"/>
<circle cx="877" cy="752" r="6.500" fill="#a0a0a0" stroke="#555"/><circle cx="877" cy="752" r="3" fill="#666"/><path d="M884 750C886 753 886 756 884 758" stroke="#8888b0" fill="none"/>
<path d="M892 748L898 745V753L892 756Z" fill="#4a9a3a"/><rect x="892" y="753" width="12" height="7" fill="#b8b8b8" stroke="#444" transform="skewY(-10) translate(0,158)"/>
<rect x="907.500" y="745.500" width="13" height="14" fill="#f0f0e0" stroke="#333"/><text x="909" y="757" font-family="Liberation Sans" font-size="8" fill="#333">53</text><path d="M908 748H920" stroke="#333"/>
<circle cx="929" cy="752" r="6.500" fill="#3070c8" stroke="#1a3a70"/><text x="926" y="756" font-family="Liberation Sans" font-size="9" fill="#fff">e</text><rect x="933" y="755" width="5" height="4" fill="#d0d8e0" stroke="#334"/>
<rect x="942" y="745" width="16" height="16" fill="#08085c"/><circle cx="950" cy="753" r="2" fill="#e8d820"/><circle cx="950" cy="753" r="4.500" fill="none" stroke="#e8d820"/><path d="M944 749C942 752 942 755 944 757M956 749C958 752 958 755 956 757" stroke="#e8d820" fill="none"/>
<rect x="960" y="745" width="16" height="16" fill="#102c70"/><path d="M961 761L968 745L975 761L968 755Z" fill="#fff"/>
</svg>

<!-- Popup menu -->
<div class="a" style="left:86px;top:99px;width:139px;height:322px;background:rgba(0,0,0,.32)"></div>
<div class="a" style="left:84px;top:97px;width:139px;height:322px;background:#fff;border:1px solid #8c8c8c">
<div class="a" style="left:1px;top:155px;width:134px;height:18px;background:#b8b4c8"></div>
<div class="m" style="top:3px">Views</div><div class="sm" style="top:5px"></div>
<div class="sep" style="top:21px"></div>
<div class="m" style="top:29px">Smooth + Highlights</div>
<div class="m" style="top:46px">Wireframe</div>
<div class="m" style="top:63px">Other</div><div class="sm" style="top:64px"></div>
<div class="m" style="top:80px">Edged Faces</div>
<div class="m" style="top:97px">Transparency</div><div class="sm" style="top:98px"></div>
<div class="sep" style="top:115px"></div>
<div class="m" style="top:123px">Show Grid</div>
<div class="m g" style="top:140px">Show Background</div>
<div class="m" style="top:157px">Show Safe Frame</div>
<div class="m" style="top:174px">Show Statistics</div>
<div class="sep" style="top:192px"></div>
<div class="m" style="top:200px">Viewport Clipping</div>
<div class="m g" style="top:217px">Texture Correction</div>
<div class="m" style="top:234px">Disable View</div>
<div class="sep" style="top:252px"></div>
<div class="m g" style="top:260px">Undo</div>
<div class="m g" style="top:277px">Redo</div>
<div class="sep" style="top:295px"></div>
<div class="m" style="top:303px">Configure...</div>
<svg class="ck" style="top:32px" viewBox="0 0 9 8"><path d="M1 4L3 7L8 1" fill="none" stroke="#000" stroke-width="1.800"/></svg>
<svg class="ck" style="top:126px" viewBox="0 0 9 8"><path d="M1 4L3 7L8 1" fill="none" stroke="#000" stroke-width="1.800"/></svg>
<svg class="ck" style="top:160px" viewBox="0 0 9 8"><path d="M1 4L3 7L8 1" fill="none" stroke="#000" stroke-width="1.800"/></svg>
<svg class="ck" style="top:220px" viewBox="0 0 9 8"><path d="M1 4L3 7L8 1" fill="none" stroke="#a8a89c" stroke-width="1.800"/></svg>
</div>
</body></html>
